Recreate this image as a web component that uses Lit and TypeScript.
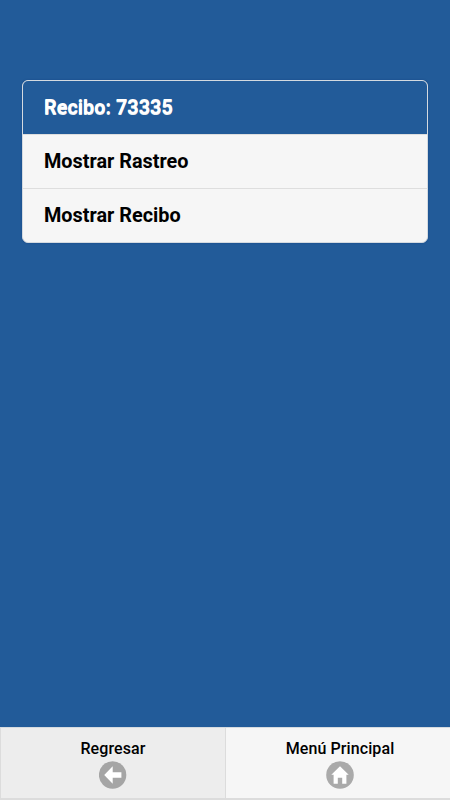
import { LitElement, html, css } from "lit";
import { customElement } from "lit/decorators.js";

@customElement("app-root")
class AppRoot extends LitElement {
  static styles = css`
    :host { display: flex; flex-direction: column; height: 800px; width: 450px; box-sizing: border-box; background: #225b99; font-family: Roboto, "Liberation Sans", sans-serif; font-weight: 700; color: #000; overflow: hidden; }
    main { flex: 1; padding: 80px 22px 0; }
    .list { border: 1px solid #d4dae0; border-radius: 6px; overflow: hidden; background: #f6f6f6; box-shadow: 0 0 2px rgba(0,40,100,.35); height: 163px; box-sizing: border-box; display: flex; flex-direction: column; }
    .row { height: 53px; flex: none; box-sizing: border-box; display: flex; align-items: center; padding: 1px 21px 0; font-size: 19.85px; line-height: 24px; }
    .row + .row { height: 54px; border-top: 1px solid #dedede; }
    .head { background: #225b99; color: #fff; text-shadow: 0 1px 0 #eee; }
    footer { display: flex; height: 73px; box-sizing: border-box; background: #f6f6f6; border-top: 1px solid #d5dbe0; border-bottom: 2px solid #dcdcdc; }
    .btn { flex: none; box-sizing: border-box; width: 225px; display: flex; flex-direction: column; align-items: center; font-size: 16px; letter-spacing: 0.1px; line-height: 20px; font-weight: 500; padding-top: 11px; border-left: 1px solid #dcdcdc; }
    .btn + .btn { width: 229px; }
    .active { background: #ededed; }
    svg { margin-top: 2px; width: 28px; height: 28px; display: block; }
  `;
  render() {
    return html`
      <main><div class="list">
        <div class="row head">Recibo: 73335</div>
        <div class="row">Mostrar Rastreo</div>
        <div class="row">Mostrar Recibo</div>
      </div></main>
      <footer>
        <div class="btn active">Regresar
          <svg viewBox="0 0 28 28"><circle cx="13.600" cy="14" r="13.700" fill="#a5a5a5"/><path d="M5.200 14l8.500-8.700v5.900h8.700v5.600h-8.700v5.900z" fill="#fff"/></svg>
        </div>
        <div class="btn">Menú Principal
          <svg viewBox="0 0 28 28"><circle cx="14" cy="14" r="13.800" fill="#aaa"/><path d="M14 5.300l8.700 8.500h-2.300v9H16.200v-6h-4.400v6H7.600v-9H5.300z" fill="#fff"/></svg>
        </div>
      </footer>`;
  }
}
